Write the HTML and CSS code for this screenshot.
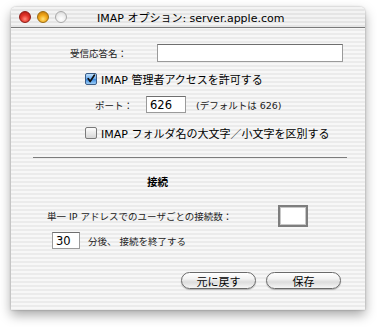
FILE: index.html
```html
<!DOCTYPE html>
<html lang="ja">
<head>
<meta charset="utf-8">
<link rel="stylesheet" href="styles.css">
</head>
<body>
<div class="window">
  <div class="titlebar">
    <div class="lights">
      <span class="light red"></span>
      <span class="light yellow"></span>
      <span class="light gray"></span>
    </div>
    <div class="title">IMAP オプション: server.apple.com</div>
  </div>
  <div class="content">
    <div class="row r1">
      <span class="small lbl1">受信応答名：</span>
      <span class="field f1"></span>
    </div>
    <div class="row r2">
      <span class="check on"><svg viewBox="0 0 12 12" width="12" height="12"><path d="M2.5 5.5 L5 9 L10 1.5" fill="none" stroke="#111" stroke-width="2" stroke-linecap="round" stroke-linejoin="round"/></svg></span>
      <span class="main">IMAP 管理者アクセスを許可する</span>
    </div>
    <div class="row r3">
      <span class="small lbl3">ポート：</span>
      <span class="field f3">626</span>
      <span class="small note">(デフォルトは 626)</span>
    </div>
    <div class="row r4">
      <span class="check"></span>
      <span class="main">IMAP フォルダ名の大文字／小文字を区別する</span>
    </div>
    <div class="sep"></div>
    <div class="heading">接続</div>
    <div class="row r5">
      <span class="small lbl5">単一 IP アドレスでのユーザごとの接続数：</span>
      <span class="box"></span>
    </div>
    <div class="row r6">
      <span class="field f6">30</span>
      <span class="small">分後、 接続を終了する</span>
    </div>
    <div class="buttons">
      <span class="btn">元に戻す</span>
      <span class="btn">保存</span>
    </div>
  </div>
</div>
</body>
</html>
```
FILE: styles.css
```css
html, body {
  margin: 0;
  padding: 0;
  background: #ffffff;
}
body {
  width: 377px;
  height: 327px;
  overflow: hidden;
  font-family: "Lucida Grande", "DejaVu Sans", "Noto Sans CJK JP", sans-serif;
  color: #000;
}
.window {
  margin: 7px 0 0 11px;
  width: 354px;
  height: 303px;
  border-radius: 5px 5px 0 0;
  background: repeating-linear-gradient(to bottom, #f7f7f7 0, #f7f7f7 2px, #ebebeb 2px, #ebebeb 4px);
  box-shadow: 0 5px 12px rgba(0,0,0,0.35), 0 0 2px rgba(0,0,0,0.3);
  overflow: hidden;
}
.titlebar {
  height: 20px;
  border-bottom: 1px solid #7a7a7a;
  display: flex;
  align-items: center;
  background: repeating-linear-gradient(to bottom, #f3f3f3 0, #f3f3f3 2px, #e5e5e5 2px, #e5e5e5 4px);
  border-radius: 5px 5px 0 0;
}
.lights {
  display: flex;
  gap: 6px;
  margin-left: 8px;
  width: 70px;
}
.light {
  width: 12px;
  height: 12px;
  border-radius: 50%;
  box-sizing: border-box;
}
.red {
  background: radial-gradient(circle at 50% 70%, #ff8a7a 0, #e2352a 45%, #a8150f 100%);
  border: 1px solid #8e1a14;
}
.yellow {
  background: radial-gradient(circle at 50% 70%, #ffe27a 0, #f2a81a 45%, #b8700a 100%);
  border: 1px solid #9a6a10;
}
.gray {
  background: radial-gradient(circle at 50% 70%, #ffffff 0, #eeeeee 50%, #cfcfcf 100%);
  border: 1px solid #a8a8a8;
}
.title {
  font-size: 11px;
  margin-left: 8px;
  white-space: nowrap;
}
.content {
  padding-top: 16px;
}
.row {
  display: flex;
  align-items: center;
}
.small {
  font-size: 9.5px;
  white-space: nowrap;
  color: #222;
}
.main {
  font-size: 11px;
  white-space: nowrap;
}
.field {
  display: flex;
  align-items: center;
  box-sizing: border-box;
  background: #fff;
  border: 1px solid #9a9a9a;
  border-top-color: #6e6e6e;
  font-size: 11.5px;
  padding-left: 3px;
}
.r1 {
  height: 18px;
  padding-left: 59px;
}
.lbl1 { width: 87px; }
.f1 { width: 186px; height: 18px; }
.r2 {
  height: 14px;
  margin-top: 10px;
  padding-left: 74px;
}
.check {
  width: 12px;
  height: 12px;
  box-sizing: border-box;
  border: 1px solid #7a7a7a;
  border-radius: 2px;
  background: linear-gradient(to bottom, #fdfdfd, #d6d6d6);
  margin-right: 4px;
  display: flex;
  align-items: center;
  justify-content: center;
}
.check.on {
  background: linear-gradient(to bottom, #bfe0fb 0, #6eaef0 45%, #3f8ce0 55%, #9ccdf6 100%);
  border-color: #3b5c86;
}
.check svg {
  display: block;
}
.r3 {
  height: 17px;
  margin-top: 10px;
  padding-left: 84px;
}
.lbl3 { width: 51px; }
.f3 { width: 40px; height: 17px; }
.note { margin-left: 10px; }
.r4 {
  height: 14px;
  margin-top: 13px;
  padding-left: 74px;
}
.sep {
  height: 1px;
  background: #7c7c7c;
  margin: 17px 18px 0 22px;
}
.heading {
  margin-top: 17px;
  height: 14px;
  line-height: 14px;
  padding-left: 136px;
  font-size: 10.5px;
  font-weight: bold;
}
.r5 {
  height: 22px;
  margin-top: 16px;
  padding-left: 36px;
}
.lbl5 { width: 231px; }
.box {
  width: 30px;
  height: 22px;
  box-sizing: border-box;
  background: #fff;
  border: 2px solid #7e7e7e;
  box-shadow: inset 0 0 0 1px #c8c8c8;
}
.r6 {
  height: 17px;
  margin-top: 5px;
  padding-left: 41px;
}
.f6 {
  width: 28px;
  height: 17px;
  margin-right: 8px;
}
.buttons {
  display: flex;
  justify-content: flex-end;
  gap: 10px;
  margin-top: 23px;
  margin-right: 24px;
}
.btn {
  width: 75px;
  height: 17px;
  box-sizing: border-box;
  border: 1px solid #6a6a6a;
  border-radius: 9px;
  background: linear-gradient(to bottom, #ffffff 0, #f2f2f2 40%, #dcdcdc 60%, #f6f6f6 100%);
  box-shadow: 0 1px 1px rgba(0,0,0,0.25);
  font-size: 11px;
  display: flex;
  align-items: center;
  justify-content: center;
}
```
